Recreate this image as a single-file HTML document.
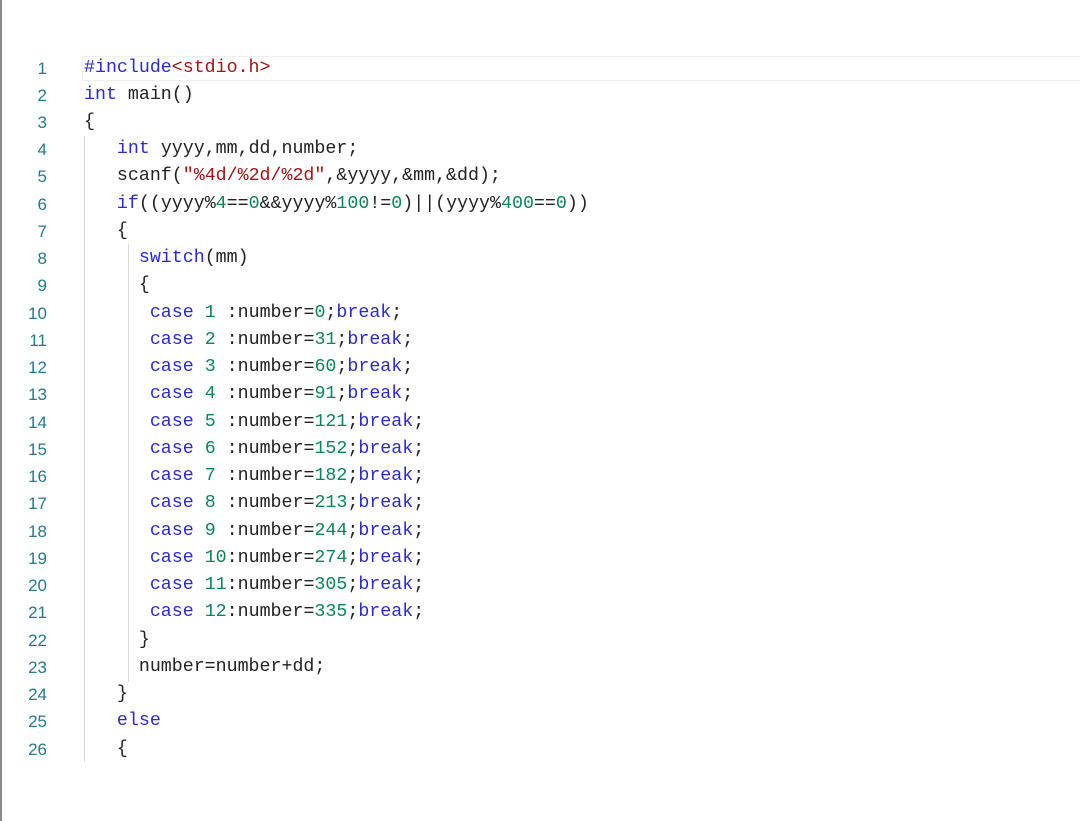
<!DOCTYPE html>
<html><head><meta charset="utf-8"><style>
html,body{margin:0;padding:0;background:#fff;width:1080px;height:821px;overflow:hidden;position:relative}
.lb{position:absolute;left:0;top:0;width:2px;height:821px;background:#8a8a8a}
.hl{position:absolute;left:82px;top:56px;width:1000px;height:25px;border:1px solid #eeeeee;box-sizing:border-box}
.g{position:absolute;width:1px;background:#d8d8d8}
.code{position:absolute;left:0;top:54.5px;width:1080px;height:720px;font-family:"Liberation Mono",monospace;font-size:18.3px;line-height:27.24px;color:#222}
.ln{position:absolute;left:0;width:47px;text-align:right;color:#237893;font-family:"Liberation Sans",sans-serif;font-size:17px}
.t{position:absolute;left:84px;white-space:pre}
.k{color:#2a2ad0}.s{color:#a31515}.n{color:#098658}
</style></head><body>
<div class="lb"></div>
<div class="hl"></div>
<div class="g" style="left:84px;top:136px;height:626px"></div>
<div class="g" style="left:128px;top:244px;height:438px"></div>
<div class="code"><div class="ln" style="top:0">1</div><div class="t" style="top:0"><span class="k">#include</span><span class="s">&lt;stdio.h&gt;</span></div><div class="ln" style="top:27.24px">2</div><div class="t" style="top:27.24px"><span class="k">int</span> main()</div><div class="ln" style="top:54.48px">3</div><div class="t" style="top:54.48px">{</div><div class="ln" style="top:81.72px">4</div><div class="t" style="top:81.72px">   <span class="k">int</span> yyyy,mm,dd,number;</div><div class="ln" style="top:108.96px">5</div><div class="t" style="top:108.96px">   scanf(<span class="s">"%4d/%2d/%2d"</span>,&amp;yyyy,&amp;mm,&amp;dd);</div><div class="ln" style="top:136.2px">6</div><div class="t" style="top:136.2px">   <span class="k">if</span>((yyyy%<span class="n">4</span>==<span class="n">0</span>&amp;&amp;yyyy%<span class="n">100</span>!=<span class="n">0</span>)||(yyyy%<span class="n">400</span>==<span class="n">0</span>))</div><div class="ln" style="top:163.44px">7</div><div class="t" style="top:163.44px">   {</div><div class="ln" style="top:190.68px">8</div><div class="t" style="top:190.68px">     <span class="k">switch</span>(mm)</div><div class="ln" style="top:217.92px">9</div><div class="t" style="top:217.92px">     {</div><div class="ln" style="top:245.16px">10</div><div class="t" style="top:245.16px">      <span class="k">case</span> <span class="n">1</span> :number=<span class="n">0</span>;<span class="k">break</span>;</div><div class="ln" style="top:272.4px">11</div><div class="t" style="top:272.4px">      <span class="k">case</span> <span class="n">2</span> :number=<span class="n">31</span>;<span class="k">break</span>;</div><div class="ln" style="top:299.64px">12</div><div class="t" style="top:299.64px">      <span class="k">case</span> <span class="n">3</span> :number=<span class="n">60</span>;<span class="k">break</span>;</div><div class="ln" style="top:326.88px">13</div><div class="t" style="top:326.88px">      <span class="k">case</span> <span class="n">4</span> :number=<span class="n">91</span>;<span class="k">break</span>;</div><div class="ln" style="top:354.12px">14</div><div class="t" style="top:354.12px">      <span class="k">case</span> <span class="n">5</span> :number=<span class="n">121</span>;<span class="k">break</span>;</div><div class="ln" style="top:381.36px">15</div><div class="t" style="top:381.36px">      <span class="k">case</span> <span class="n">6</span> :number=<span class="n">152</span>;<span class="k">break</span>;</div><div class="ln" style="top:408.6px">16</div><div class="t" style="top:408.6px">      <span class="k">case</span> <span class="n">7</span> :number=<span class="n">182</span>;<span class="k">break</span>;</div><div class="ln" style="top:435.84px">17</div><div class="t" style="top:435.84px">      <span class="k">case</span> <span class="n">8</span> :number=<span class="n">213</span>;<span class="k">break</span>;</div><div class="ln" style="top:463.08px">18</div><div class="t" style="top:463.08px">      <span class="k">case</span> <span class="n">9</span> :number=<span class="n">244</span>;<span class="k">break</span>;</div><div class="ln" style="top:490.32px">19</div><div class="t" style="top:490.32px">      <span class="k">case</span> <span class="n">10</span>:number=<span class="n">274</span>;<span class="k">break</span>;</div><div class="ln" style="top:517.56px">20</div><div class="t" style="top:517.56px">      <span class="k">case</span> <span class="n">11</span>:number=<span class="n">305</span>;<span class="k">break</span>;</div><div class="ln" style="top:544.8px">21</div><div class="t" style="top:544.8px">      <span class="k">case</span> <span class="n">12</span>:number=<span class="n">335</span>;<span class="k">break</span>;</div><div class="ln" style="top:572.04px">22</div><div class="t" style="top:572.04px">     }</div><div class="ln" style="top:599.28px">23</div><div class="t" style="top:599.28px">     number=number+dd;</div><div class="ln" style="top:626.52px">24</div><div class="t" style="top:626.52px">   }</div><div class="ln" style="top:653.76px">25</div><div class="t" style="top:653.76px">   <span class="k">else</span></div><div class="ln" style="top:681px">26</div><div class="t" style="top:681px">   {</div></div>
</body></html>
